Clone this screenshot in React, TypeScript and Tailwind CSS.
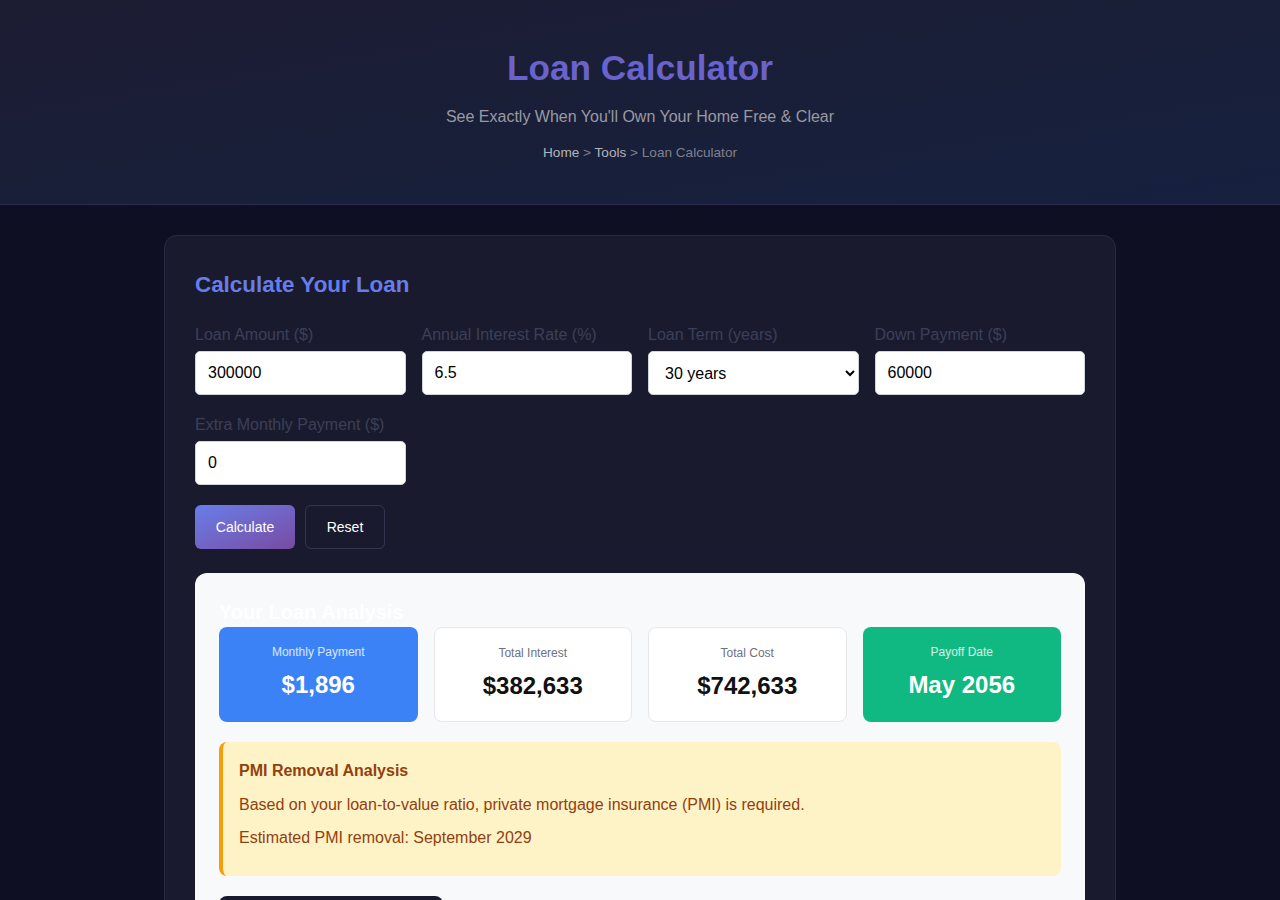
import { useState } from "react";

const font = { fontFamily: '"Liberation Sans", Arial, sans-serif' };

function Field({ label, children }: { label: string; children: React.ReactNode }) {
  return (
    <div className="flex flex-col">
      <label className="mb-[7px] text-[16px] leading-[18px] text-[#3b4058]">{label}</label>
      {children}
    </div>
  );
}

const inputCls =
  "h-[44px] w-full rounded-[5px] border border-[#cfd3dc] bg-white px-3 text-[16px] text-black outline-none";

function Stat({
  label,
  value,
  tone,
}: {
  label: string;
  value: string;
  tone: "blue" | "white" | "green";
}) {
  const box =
    tone === "blue"
      ? "bg-[#3b82f6] text-white"
      : tone === "green"
        ? "bg-[#10b981] text-white"
        : "bg-white border border-[#e5e7eb] text-[#111]";
  const lab = tone === "white" ? "text-[#6b7280]" : "text-white/80";
  return (
    <div className={`flex h-[95px] flex-col items-center rounded-[8px] pt-[17px] ${box}`}>
      <div className={`text-[12px] leading-[16px] ${lab}`}>{label}</div>
      <div className="mt-[10px] text-[24px] font-bold leading-[30px]">{value}</div>
    </div>
  );
}

export default function App() {
  const [amount, setAmount] = useState("300000");
  const [rate, setRate] = useState("6.5");
  const [term, setTerm] = useState("30");
  const [down, setDown] = useState("60000");
  const [extra, setExtra] = useState("0");

  return (
    <div className="min-h-[900px] bg-[#0f0f23]" style={font}>
      <header className="h-[205px] border-b border-[#2c2c52] bg-gradient-to-br from-[#1c1c32] to-[#16213f] pt-[46px] text-center">
        <h1 className="text-[35.2px] font-bold leading-[44px] text-[#6a63cc]">Loan Calculator</h1>
        <p className="mt-[17px] text-[16px] leading-[20px] text-[#9a9aa2]">
          See Exactly When You'll Own Your Home Free &amp; Clear
        </p>
        <nav className="mt-[18px] text-[13.6px] leading-[16px] text-[#80808a]">
          <a className="text-[#b4b4bc]">Home</a> &gt; <a className="text-[#b4b4bc]">Tools</a> &gt; Loan
          Calculator
        </nav>
      </header>

      <main className="mx-auto mt-[30px] w-[952px] rounded-[13px] border border-[#2a2a45] bg-[#1a1a2e] px-[30px] pt-[36px] pb-10">
        <h2 className="text-[22.4px] font-bold leading-[26px] text-[#667eea]">Calculate Your Loan</h2>

        <div className="mt-[28px] grid grid-cols-4 gap-x-4 gap-y-[21px]">
          <Field label="Loan Amount ($)">
            <input className={inputCls} value={amount} onChange={(e) => setAmount(e.target.value)} />
          </Field>
          <Field label="Annual Interest Rate (%)">
            <input className={inputCls} value={rate} onChange={(e) => setRate(e.target.value)} />
          </Field>
          <Field label="Loan Term (years)">
            <select className={inputCls} value={term} onChange={(e) => setTerm(e.target.value)}>
              <option value="15">15 years</option>
              <option value="20">20 years</option>
              <option value="30">30 years</option>
            </select>
          </Field>
          <Field label="Down Payment ($)">
            <input className={inputCls} value={down} onChange={(e) => setDown(e.target.value)} />
          </Field>
          <Field label="Extra Monthly Payment ($)">
            <input className={inputCls} value={extra} onChange={(e) => setExtra(e.target.value)} />
          </Field>
        </div>

        <div className="mt-5 flex gap-[10px]">
          <button className="h-[44px] w-[100px] rounded-[6px] bg-gradient-to-br from-[#667eea] to-[#764ba2] text-[14px] text-white">
            Calculate
          </button>
          <button className="h-[44px] w-[80px] rounded-[6px] border border-[#34344f] bg-transparent text-[14px] text-white">
            Reset
          </button>
        </div>

        <section className="mt-6 rounded-[12px] bg-[#f8f9fb] px-6 pt-[27px] pb-6">
          <h3 className="text-[20px] font-bold leading-[24px] text-white">Your Loan Analysis</h3>
          <div className="mt-[3px] grid grid-cols-4 gap-4">
            <Stat label="Monthly Payment" value="$1,896" tone="blue" />
            <Stat label="Total Interest" value="$382,633" tone="white" />
            <Stat label="Total Cost" value="$742,633" tone="white" />
            <Stat label="Payoff Date" value="May 2056" tone="green" />
          </div>

          <div className="mt-5 rounded-[8px] border-l-4 border-[#f59e0b] bg-[#fef3c7] px-4 pt-[19px] pb-[28px] text-[#92400e]">
            <h4 className="text-[16px] font-bold leading-[20px]">PMI Removal Analysis</h4>
            <p className="mt-[14px] text-[16px] leading-[20px]">
              Based on your loan-to-value ratio, private mortgage insurance (PMI) is required.
            </p>
            <p className="mt-[13px] text-[16px] leading-[20px]">Estimated PMI removal: September 2029</p>
          </div>

          <button className="mt-5 h-[44px] w-[224px] rounded-[8px] bg-[#1a1a2e] text-[14px] text-white">
            View Amortization Schedule
          </button>
        </section>
      </main>
    </div>
  );
}
